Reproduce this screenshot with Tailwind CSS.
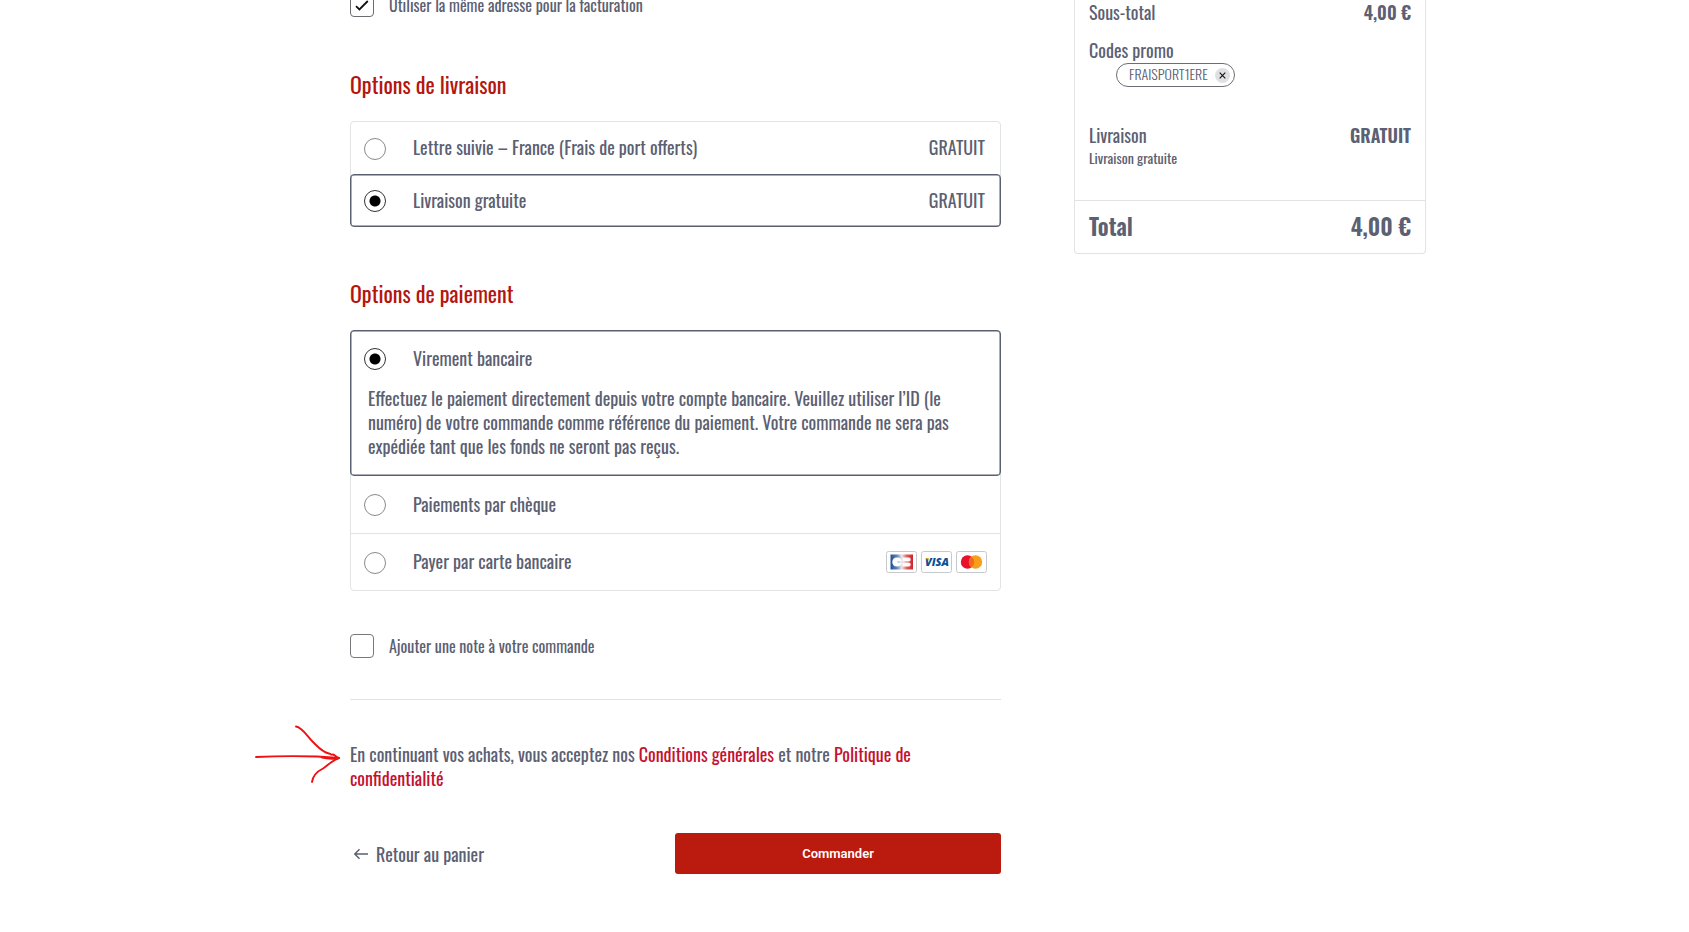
<!DOCTYPE html>
<html lang="fr">
<head>
<meta charset="utf-8">
<meta name="viewport" content="width=device-width, initial-scale=1">
<title>Validation de la commande</title>
<script src="https://cdn.jsdelivr.net/npm/@tailwindcss/browser@4"></script>
</head>
<body class="bg-white font-['Oswald','Liberation_Sans_Narrow','Roboto_Condensed','Roboto',sans-serif] text-[18px] leading-6 text-[#5b6072]">
<main class="flex items-start gap-[73px] overflow-hidden pl-[350px] pr-[263px]">
  <form class="-mt-[7px] min-w-0 flex-1">
    <label class="flex items-center gap-[15px] text-base leading-6">
      <span class="relative flex size-6 shrink-0">
        <input type="checkbox" checked class="peer size-6 appearance-none rounded border border-[#6b6b70] bg-white">
        <svg class="absolute inset-0 hidden size-6 peer-checked:block" viewBox="0 0 24 24" fill="none" stroke="#111" stroke-width="1.8"><path d="M6 13.2l3.4 3.2L17.8 8"/></svg>
      </span>
      Utiliser la même adresse pour la facturation
    </label>

    <fieldset class="mt-[51px]">
      <legend class="text-[22px] leading-8 text-[#b4160e]">Options de livraison</legend>
      <div class="mt-[21px] rounded border border-[#e2e3e5]">
        <label class="flex h-[52px] items-center pl-[13px] pr-[15px] pt-px">
          <input type="radio" name="ship" class="size-[22px] shrink-0 appearance-none rounded-full border border-[#8a8a8f]">
          <span class="ml-[27px] flex-1 pb-[3px]">Lettre suivie – France (Frais de port offerts)</span>
          <span class="pb-[3px]">GRATUIT</span>
        </label>
        <label class="-mx-px -mb-px flex h-[53px] items-center rounded border border-[#5b6070] pl-[13px] pr-[15px] pt-px ring-[0.5px] ring-inset ring-[#5b6070]">
          <input type="radio" name="ship" checked class="size-[22px] shrink-0 appearance-none rounded-full border border-[#333] bg-[radial-gradient(circle,#000_5px,transparent_6px)]">
          <span class="ml-[27px] flex-1 pb-[3px]">Livraison gratuite</span>
          <span class="pb-[3px]">GRATUIT</span>
        </label>
      </div>
    </fieldset>

    <fieldset class="mt-[50px]">
      <legend class="text-[22px] leading-8 text-[#b4160e]">Options de paiement</legend>
      <div class="mt-[21px] rounded border border-[#e2e3e5]">
        <div class="-mx-px -mt-px rounded border border-[#5b6070] pb-[17px] ring-[0.5px] ring-inset ring-[#5b6070]">
          <label class="flex h-[55px] items-center pl-[13px] pr-[15px] pt-px">
            <input type="radio" name="pay" checked class="size-[22px] shrink-0 appearance-none rounded-full border border-[#333] bg-[radial-gradient(circle,#000_5px,transparent_6px)]">
            <span class="ml-[27px] pb-0.5">Virement bancaire</span>
          </label>
          <p class="px-[17px]">Effectuez le paiement directement depuis votre compte bancaire. Veuillez utiliser l’ID (le numéro) de votre commande comme référence du paiement. Votre commande ne sera pas expédiée tant que les fonds ne seront pas reçus.</p>
        </div>
        <label class="flex h-[57px] items-center pl-[13px] pr-[15px] pt-px">
          <input type="radio" name="pay" class="size-[22px] shrink-0 appearance-none rounded-full border border-[#8a8a8f]">
          <span class="ml-[27px] pb-[3px]">Paiements par chèque</span>
        </label>
        <label class="flex h-[57px] items-center border-t border-[#e2e3e5] pl-[13px] pr-[13px] pt-px">
          <input type="radio" name="pay" class="size-[22px] shrink-0 appearance-none rounded-full border border-[#8a8a8f]">
          <span class="ml-[27px] flex-1 pb-[3px]">Payer par carte bancaire</span>
          <span class="flex gap-1 pb-px">
            <svg class="h-[22px] w-[31px]" viewBox="0 0 31 22" role="img" aria-label="Carte Bancaire">
              <defs><linearGradient id="cb"><stop offset="0" stop-color="#1d4f97"/><stop offset=".3" stop-color="#6689b8"/><stop offset=".5" stop-color="#f0e6e8"/><stop offset=".72" stop-color="#e0605c"/><stop offset="1" stop-color="#d0202a"/></linearGradient></defs>
              <rect x=".5" y=".5" width="30" height="21" rx="2" fill="#fff" stroke="#c6c9ce"/>
              <path fill="url(#cb)" d="M4.500 3.500h22.500v15H4.500z"/>
              <path fill="#fff" d="M11 6.500c3 0 4.500 1.500 4.700 4H11.500v1h4.200c-.2 2.500-1.700 4-4.700 4-3 0-4.700-2-4.700-4.500s1.700-4.500 4.700-4.500zM16.500 6.500h6.300c2.500 0 2.500 4 0 4h-6.300zM16.500 11.500h6.300c2.500 0 2.500 4 0 4h-6.300z"/>
            </svg>
            <svg class="h-[22px] w-[31px]" viewBox="0 0 31 22" role="img" aria-label="Visa">
              <rect x=".5" y=".5" width="30" height="21" rx="2" fill="#fff" stroke="#c6c9ce"/>
              <text x="16" y="15" text-anchor="middle" font-family="Open Sans, sans-serif" font-size="11" font-weight="800" font-style="italic" fill="#0e4f95">VISA</text>
              <path fill="#f2ae14" d="M4 7h3.500l1.200 3.500C7.600 8.800 6.300 7.800 4 7z"/>
            </svg>
            <svg class="h-[22px] w-[31px]" viewBox="0 0 31 22" role="img" aria-label="Mastercard">
              <rect x=".5" y=".5" width="30" height="21" rx="2" fill="#fff" stroke="#c6c9ce"/>
              <circle cx="11.500" cy="11" r="6.700" fill="#e8102a"/><circle cx="19.500" cy="11" r="6.700" fill="#f79e1b"/>
              <path fill="#f26a1b" d="M15.500 5.600a6.700 6.700 0 0 1 0 10.800a6.700 6.700 0 0 1 0-10.800z"/>
            </svg>
          </span>
        </label>
      </div>
    </fieldset>

    <label class="mt-[43px] flex items-center gap-[15px] border-b border-[#e2e3e5] pb-[41px] text-base leading-6">
      <input type="checkbox" class="size-6 shrink-0 appearance-none rounded border border-[#77777c] bg-white">
      Ajouter une note à votre commande
    </label>

    <div class="relative mt-[42px]">
      <svg class="absolute right-full top-0 mr-2 -mt-[19px] h-[62px] w-[90px]" viewBox="0 0 90 62" fill="none" stroke="#ee1111" stroke-width="1.900" stroke-linecap="round" stroke-linejoin="round" aria-hidden="true">
        <path d="M4 34C25 33 48 33 65 33.500C72 34 80 34.500 87 35C81 37 76 42 71 45.500C66 48 61 52 60 59"/>
        <path d="M44 3.500C50 4 55 13 61 19C66 24 70 29 77 30.500C80 31 78 32 81 31.500C83 32 84 34 87 35C84 36 76 36 70 34.500"/>
      </svg>
      <p>En continuant vos achats, vous acceptez nos <a href="#" class="text-[#c4122f]">Conditions générales</a> et notre <a href="#" class="text-[#c4122f]">Politique de confidentialité</a></p>
    </div>

    <div class="mt-[43px] flex items-center">
      <a href="#" class="flex flex-1 items-center gap-2 pl-1">
        <svg class="h-3 w-[14px]" viewBox="0 0 14 12" fill="none" stroke="currentColor" stroke-width="1.400"><path d="M14 6H1M5.500 1.200L.8 6l4.700 4.800"/></svg>
        Retour au panier
      </a>
      <button type="submit" class="h-[41px] w-[326px] rounded-[3px] bg-[#bb1a0e] font-['Roboto',sans-serif] text-[13px] font-semibold text-white">Commander</button>
    </div>
  </form>

  <aside class="w-[352px] shrink-0 rounded-b border border-t-0 border-[#e2e3e5]">
    <div class="flex justify-between px-[14px]"><span>Sous-total</span><strong class="font-semibold">4,00 €</strong></div>
    <div class="mt-[14px] px-[14px]">
      <div>Codes promo</div>
      <div class="ml-[27px] mt-px flex h-6 w-fit items-center gap-[7px] rounded-full border border-[#6b6e75] pl-3 pr-1 text-sm leading-5 text-[#5b6072]">
        <span class="pb-0.5 font-light">FRAISPORT1ERE</span>
        <button type="button" aria-label="Retirer le code" class="grid size-[15px] place-items-center rounded-full bg-[#e0e0e2]">
          <svg class="size-[7px]" viewBox="0 0 7 7" stroke="#111" stroke-width="1.100"><path d="M.7.7l5.600 5.600M6.300.7L.7 6.300"/></svg>
        </button>
      </div>
    </div>
    <div class="mt-9 flex justify-between px-[14px]"><span>Livraison</span><strong class="font-semibold">GRATUIT</strong></div>
    <div class="px-[14px] pb-[31px] text-sm leading-[22px]">Livraison gratuite</div>
    <div class="flex justify-between border-t border-[#e2e3e5] px-[14px] pb-[11px] pt-[9px] text-[23px] font-semibold leading-8"><span>Total</span><span>4,00 €</span></div>
  </aside>
</main>
</body>
</html>
